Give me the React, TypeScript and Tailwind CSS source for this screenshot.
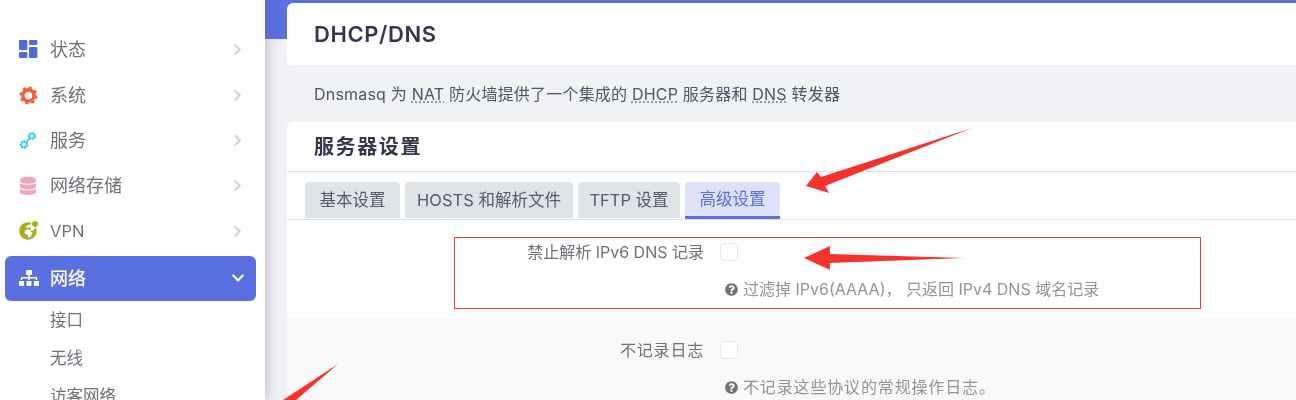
import { FaChevronDown, FaChevronRight, FaDatabase, FaGlobeAfrica, FaQuestionCircle, FaSitemap } from 'react-icons/fa';

const FONT = 'font-["Inter","Noto_Sans_CJK_SC",sans-serif]';

function StatusIcon() {
  return (
    <svg width="19" height="19" viewBox="0 0 19 19" fill="#5468dc">
      <rect x="0" y="0" width="8.4" height="10" rx="1" />
      <rect x="10" y="0" width="8.4" height="5" rx="1" />
      <rect x="0" y="12" width="8.4" height="6" rx="1" />
      <rect x="10" y="7" width="8.4" height="11" rx="1" />
    </svg>
  );
}

function GearIcon() {
  return (
    <svg width="19" height="19" viewBox="0 0 19 19" fill="none" stroke="#f0603f">
      <circle cx="9.5" cy="9.5" r="5.6" strokeWidth="3.6" />
      <circle cx="9.5" cy="9.5" r="8" strokeWidth="2" strokeDasharray="3.2 3.08" />
    </svg>
  );
}

function ServiceIcon() {
  return (
    <svg width="19" height="19" viewBox="0 0 19 19" fill="none" stroke="#14c8e6">
      <circle cx="5" cy="13.5" r="3" strokeWidth="2.6" strokeDasharray="2 0.6" />
      <circle cx="13" cy="5" r="2.8" strokeWidth="2.2" strokeDasharray="2 0.5" />
      <path d="M7.5 10.5 10.5 7.5" strokeWidth="1.4" />
    </svg>
  );
}

function VpnIcon() {
  return (
    <span className="relative flex">
      <FaGlobeAfrica className="text-[18px] text-[#a8ad1c]" />
      <span className="absolute -right-[2px] -top-[2px] h-[8px] w-[8px] rounded-full border border-white bg-[#a8ad1c]" />
    </span>
  );
}

const menu = [
  { label: '状态', icon: <StatusIcon />, size: 'text-[18px]' },
  { label: '系统', icon: <GearIcon />, size: 'text-[18px]' },
  { label: '服务', icon: <ServiceIcon />, size: 'text-[18px]' },
  { label: '网络存储', icon: <FaDatabase className="text-[18px] text-[#f3a4b5]" />, size: 'text-[18px]' },
  { label: 'VPN', icon: <VpnIcon />, size: 'text-[16.5px]' },
];

function Sidebar() {
  return (
    <aside className="z-10 flex w-[265px] shrink-0 flex-col bg-white pt-[27px] shadow-[3px_0_12px_rgba(90,100,125,0.3)]">
      {menu.map((m) => (
        <div key={m.label} className={`flex h-[45.4px] shrink-0 items-center pl-[19px] pr-[21px] text-[#6f7179] ${m.size}`}>
          <span className="flex w-[31px] shrink-0 items-center">{m.icon}</span>
          <span className="flex-1">{m.label}</span>
          <FaChevronRight className="text-[13px] text-[#cfd2d6]" />
        </div>
      ))}
      <div className="ml-[5px] mt-[2px] flex h-[45px] w-[251px] shrink-0 items-center rounded-[6px] bg-[#5a6fe0] pl-[14px] pr-[11px] text-[18px] font-medium text-white">
        <FaSitemap className="mr-[11px] w-[20px] shrink-0 text-[18px]" />
        <span className="flex-1">网络</span>
        <FaChevronDown className="text-[14px]" />
      </div>
      <div className="flex flex-col pl-[50px] text-[16.5px] text-[#6f7179]">
        <div className="flex h-[38px] shrink-0 items-center">接口</div>
        <div className="flex h-[38px] shrink-0 items-center">无线</div>
        <div className="flex h-[38px] shrink-0 items-center">访客网络</div>
      </div>
    </aside>
  );
}

const tabs = [
  { label: '基本设置', w: 'w-[95px]' },
  { label: 'HOSTS 和解析文件', w: 'w-[168px]' },
  { label: 'TFTP 设置', w: 'w-[102px]' },
];

function Abbr({ children }: { children: string }) {
  return <span className="underline decoration-[#6f8a90] decoration-dotted underline-offset-2">{children}</span>;
}

function OptionRow({ label, help, shaded }: { label: string; help: string; shaded?: boolean }) {
  return (
    <div className={`h-[98px] pt-[22px] ${shaded ? 'bg-[#f9f9f9]' : 'bg-white'}`}>
      <div className="flex items-center">
        <div className={`w-[417px] shrink-0 text-right text-[16px] leading-[20px] text-[#6f7179] ${shaded ? 'tracking-[0.8px]' : ''}`}>{label}</div>
        <div className="ml-[16px] h-[18px] w-[18px] rounded-[4px] border border-[#e6e8eb] bg-white" />
      </div>
      <div className={`ml-[438px] mt-[17px] flex items-center gap-[5px] text-[16px] leading-[20px] text-[#90939a] ${shaded ? 'tracking-[0.85px]' : ''}`}>
        <FaQuestionCircle className="text-[13px] text-[#6f7179]" />
        <span>{help}</span>
      </div>
    </div>
  );
}

export default function App() {
  return (
    <div className={`relative flex h-[400px] w-[1296px] overflow-hidden bg-[#f0f2f6] blur-[0.4px] ${FONT}`}>
      <Sidebar />
      <main className="relative min-w-0 flex-1 pl-[22px]">
        {/* blue header strip behind the title card */}
        <div className="absolute inset-x-0 top-0 h-[39px] bg-[#5a6fe0]" />
        <div className="relative mt-[3px] flex h-[62px] w-[1040px] items-center rounded-[6px] bg-white pl-[27px] text-[22px] font-semibold tracking-[0.6px] text-[#33384d]">
          DHCP/DNS
        </div>
        <div className="flex h-[57px] items-center pl-[27px] text-[16px] tracking-[0.2px] text-[#4f5668]">
          <span>
            Dnsmasq 为 <Abbr>NAT</Abbr> 防火墙提供了一个集成的 <Abbr>DHCP</Abbr> 服务器和 <Abbr>DNS</Abbr> 转发器
          </span>
        </div>
        <section className="w-[1040px] rounded-t-[6px] bg-white">
          <h3 className="flex h-[50px] items-center border-b border-[#dcdfe3] pl-[27px] text-[20px] font-semibold tracking-[1.6px] text-[#33384d]">
            服务器设置
          </h3>
          <div className="flex h-[48px] items-end gap-[5px] border-b border-[#dee2e6] pl-[18px]">
            {tabs.map((t) => (
              <div key={t.label} className={`mb-[1px] flex h-[36px] items-center justify-center rounded-t-[4px] bg-[#dfe4e9] text-[16.5px] text-[#555b6b] ${t.w}`}>
                {t.label}
              </div>
            ))}
            <div className="flex h-[37px] w-[95px] items-center justify-center rounded-t-[4px] border-b-[3px] border-[#5a6fe0] bg-[#dde2fb] text-[16.5px] text-[#5a6fe0]">
              高级设置
            </div>
          </div>
          <OptionRow label="禁止解析 IPv6 DNS 记录" help="过滤掉 IPv6(AAAA)， 只返回 IPv4 DNS 域名记录" />
          <OptionRow label="不记录日志" help="不记录这些协议的常规操作日志。" shaded />
        </section>
      </main>

      {/* red annotations drawn on top of the screenshot */}
      <div className="absolute left-[454px] top-[237px] h-[72px] w-[747px] border border-[#e23b3b]" />
      <svg className="absolute left-0 top-0" width="1296" height="400" fill="#f5322d">
        <polygon points="806,186 817,172 821,177 972,128 825,186 829,193" />
        <polygon points="804,258 830,246 830,254 964,258 830,263 830,270" />
        <polygon points="283,400 338,364 296,400" />
      </svg>
    </div>
  );
}
